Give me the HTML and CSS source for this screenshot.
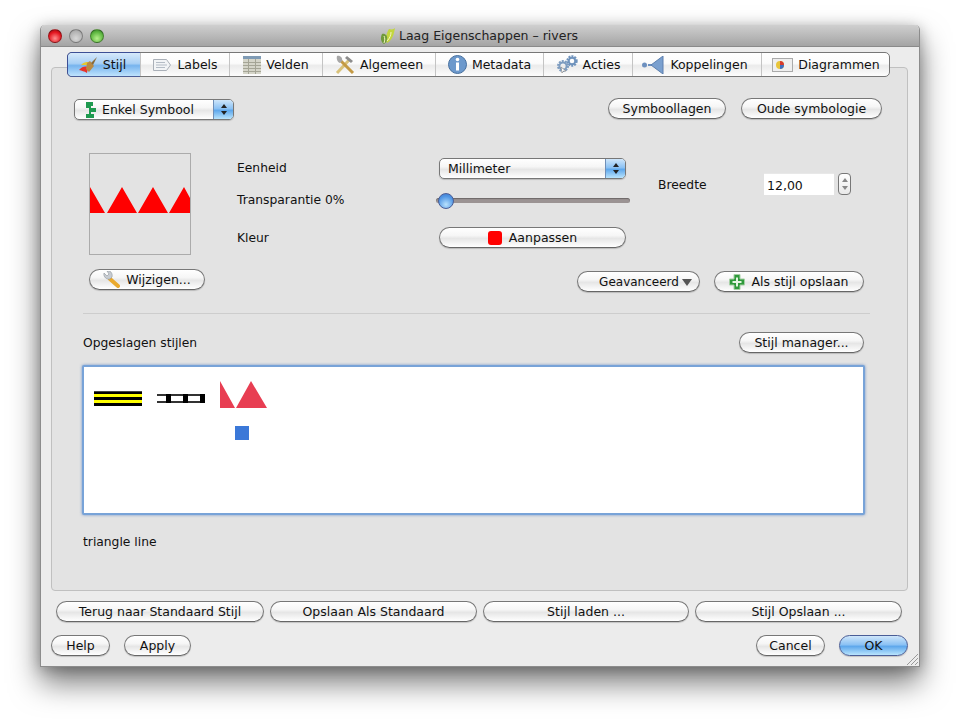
FILE: index.html
```html
<!DOCTYPE html>
<html lang="nl">
<head>
<meta charset="utf-8">
<title>Laag Eigenschappen - rivers</title>
<link rel="stylesheet" href="styles.css">
</head>
<body>
<div class="window">
  <header class="titlebar">
    <div class="lights"><span class="light red"></span><span class="light grey"></span><span class="light green"></span></div>
    <div class="title">
      <svg class="title-icon" width="16" height="18" viewBox="0 0 16 18"><path d="M9 2c3 1 5 0 6-1-1 5-2 12-8 15C5 12 6 7 9 2z" fill="#c3d63f"/><path d="M2 7c3-1 6 2 5 5 0 2-1 4-3 5C1 15 0 11 2 7z" fill="#6f9a3a"/><path d="M4 9c1 2 1 4 0 7M11 5c0 3-1 6-4 9" stroke="#f4f7c0" fill="none"/></svg>
      <span>Laag Eigenschappen – rivers</span>
    </div>
  </header>
  <main class="content">
    <nav class="tabs">
      <div class="tab active">
        <svg width="20" height="18" viewBox="0 0 20 18"><path d="M1 14c3-4 7-4 9-3l-1 6c-3-2-5-2-8-3z" fill="#e8322a"/><path d="M3 9c3-3 5-3 7-3l1 3C8 9 6 9 3 9z" fill="#e7c82e"/><path d="M9 7l3-2 4 5-5 6-3-3z" fill="#b98a45"/><path d="M13 7l6-6-4 8z" fill="#8a6b3a"/></svg>
        <span>Stijl</span></div>
      <div class="tab">
        <svg width="20" height="14" viewBox="0 0 20 14"><path d="M1.500 1.500h13l4 5.500-4 5.500h-13z" fill="#f2f4f6" stroke="#aab0b8"/><path d="M4 4.500h9M4 7h11M4 9.500h9" stroke="#b4bcc6"/></svg>
        <span>Labels</span></div>
      <div class="tab">
        <svg width="18" height="18" viewBox="0 0 18 18"><rect width="18" height="18" fill="#d5d5c9"/><rect width="18" height="3" fill="#7f9bb5"/><path d="M0 6.500h18M0 9.500h18M0 12.500h18M0 15.500h18M5.500 3v15M12.500 3v15" stroke="#a5a596"/></svg>
        <span>Velden</span></div>
      <div class="tab">
        <svg width="20" height="20" viewBox="0 0 20 20"><path d="M2 18L15 4" stroke="#d9c27a" stroke-width="3"/><path d="M12 1l6 5-2 2-6-5z" fill="#8d8d8d"/><path d="M18 18L6 6" stroke="#c49a44" stroke-width="3"/><path d="M2 1c3-1 6 2 5 5L5 8C3 8 1 4 2 1z" fill="#a7a7a7"/></svg>
        <span>Algemeen</span></div>
      <div class="tab">
        <svg width="19" height="19" viewBox="0 0 19 19"><circle cx="9.500" cy="9.500" r="9" fill="#6d99cc" stroke="#47709f"/><circle cx="9.500" cy="4.500" r="1.800" fill="#fff"/><rect x="8" y="7.500" width="3" height="8" fill="#fff"/></svg>
        <span>Metadata</span></div>
      <div class="tab">
        <svg width="22" height="19" viewBox="0 0 22 19"><circle cx="7" cy="11" r="5" fill="none" stroke="#7d9cc0" stroke-width="2" stroke-dasharray="2 1.100"/><circle cx="7" cy="11" r="3.600" fill="none" stroke="#7d9cc0" stroke-width="2"/><circle cx="16" cy="6" r="4.700" fill="none" stroke="#6f93bd" stroke-width="2" stroke-dasharray="2 1"/><circle cx="16" cy="6" r="3.300" fill="none" stroke="#6f93bd" stroke-width="2"/><path d="M5 12l1 6 1.500-2 2.500 0z" fill="#fff" stroke="#777" stroke-width=".6"/></svg>
        <span>Acties</span></div>
      <div class="tab links">
        <svg width="23" height="18" viewBox="0 0 23 18"><circle cx="2.500" cy="9" r="2.500" fill="#6d90bf"/><path d="M6 9h4" stroke="#6d90bf" stroke-width="2"/><path d="M9 9l12-9v18z" fill="#7aa0cf" stroke="#5c7fae"/></svg>
        <span>Koppelingen</span></div>
      <div class="tab last">
        <svg width="21" height="14" viewBox="0 0 21 14"><rect x=".5" y=".5" width="20" height="13" fill="#efefef" stroke="#aaa"/><circle cx="8" cy="7" r="4" fill="#e8c53a"/><path d="M8 7V3a4 4 0 0 1 4 4z" fill="#d63a2f"/><path d="M8 7h4a4 4 0 0 1-4 4z" fill="#3f6fc0"/></svg>
        <span>Diagrammen</span></div>
    </nav>
    <section class="pane">
      <div class="top-row">
        <div class="select symbol-select">
          <svg class="select-icon" width="12" height="16" viewBox="0 0 12 16"><path d="M1 0h7v4H6v2h5v4H6v2h3v4H1v-4h3V6H1z" fill="#1f9a50"/></svg>
          <span class="select-text">Enkel Symbool</span>
          <span class="arrows"><i class="up"></i><i class="down"></i></span>
        </div>
        <div class="top-buttons">
          <button class="btn symbol-layers">Symboollagen</button>
          <button class="btn old-symbology">Oude symbologie</button>
        </div>
      </div>

      <div class="settings">
        <div class="preview">
          <svg width="100" height="100" viewBox="0 0 100 100"><path d="M0 33L15 59H0zM17 59L32 33 47 59zM48 59L63 33 78 59zM79 59L94 33 100 44V59z" fill="#f00"/></svg>
        </div>
        <div class="form">
          <label class="lbl eenheid">Eenheid</label>
          <div class="select unit-select">
            <span class="select-text">Millimeter</span>
            <span class="arrows"><i class="up"></i><i class="down"></i></span>
          </div>
          <div class="width-field">
            <label class="lbl breedte">Breedte</label>
            <span class="spin">12,00</span>
            <span class="stepper"><i class="up"></i><i class="down"></i></span>
          </div>
          <label class="lbl transparency">Transparantie 0%</label>
          <div class="slider"><span class="knob"></span></div>
          <label class="lbl kleur">Kleur</label>
          <button class="btn color-btn"><span class="swatch"></span>Aanpassen</button>
        </div>
      </div>

      <div class="action-row">
        <button class="btn change-btn">
          <svg width="17" height="17" viewBox="0 0 17 17"><path d="M7 8l8 7" stroke="#e9a92e" stroke-width="4" stroke-linecap="round"/><path d="M1 2l3 3 2-2-2-3C7-1 10 2 9 6L7 8C4 9 0 6 1 2z" fill="#c7ccd2" stroke="#8d939a" stroke-width=".6"/></svg>
          Wijzigen...</button>
        <div class="action-right">
          <button class="btn advanced-btn">Geavanceerd<i class="menu-arrow"></i></button>
          <button class="btn save-style-btn">
            <svg width="16" height="16" viewBox="0 0 16 16"><path d="M5 .5h6v4.500h4.500v6H11v4.500H5V11H.5V5H5z" fill="#2f9a3b" stroke="#a5cfa5"/><path d="M7 3.500h2V7h3.500v2H9v3.500H7V9H3.500V7H7z" fill="#e4f5e2"/></svg>
            Als stijl opslaan</button>
        </div>
      </div>

      <hr class="divider">

      <div class="saved-header">
        <span class="lbl">Opgeslagen stijlen</span>
        <button class="btn manager-btn">Stijl manager...</button>
      </div>

      <div class="style-list">
        <svg width="48" height="36" viewBox="0 0 48 36"><rect y="11" width="48" height="15" fill="#000"/><rect y="14" width="48" height="3" fill="#ff0"/><rect y="20" width="48" height="3" fill="#ff0"/><rect y="11" width="48" height="1" fill="#444"/></svg>
        <svg width="48" height="36" viewBox="0 0 48 36"><rect y="14" width="48" height="9" fill="#333"/><rect y="16" width="9" height="5" fill="#fff"/><rect x="14" y="16" width="12" height="5" fill="#fff"/><rect x="31" y="16" width="12" height="5" fill="#fff"/><rect x="9" y="14" width="5" height="9" fill="#000"/><rect x="26" y="14" width="5" height="9" fill="#000"/><rect x="43" y="14" width="5" height="9" fill="#000"/></svg>
        <svg width="48" height="36" viewBox="0 0 48 36"><path d="M0 1L15 28H0zM16 28L31 1 47 28z" fill="#e83e52"/></svg>
        <span class="list-spacer"></span>
        <span class="list-spacer"></span>
        <svg width="48" height="34" viewBox="0 0 48 34"><rect x="15" y="10" width="14" height="14" fill="#3b78d8"/></svg>
      </div>

      <p class="lbl caption">triangle line</p>
    </section>

    <div class="style-buttons">
      <button class="btn">Terug naar Standaard Stijl</button>
      <button class="btn">Opslaan Als Standaard</button>
      <button class="btn">Stijl laden ...</button>
      <button class="btn">Stijl Opslaan ...</button>
    </div>

    <div class="dialog-buttons">
      <div class="dialog-left">
        <button class="btn help-btn">Help</button>
        <button class="btn apply-btn">Apply</button>
      </div>
      <div class="dialog-right">
        <button class="btn cancel-btn">Cancel</button>
        <button class="btn primary ok-btn">OK</button>
      </div>
    </div>
  </main>
  <svg class="grip" width="13" height="13" viewBox="0 0 13 13"><path d="M1 12L12 1M5 12l7-7M9 12l3-3" stroke="#999" fill="none"/></svg>
</div>
</body>
</html>
```
FILE: styles.css
```css
* { box-sizing: border-box; }
html, body { margin: 0; height: 100%; background: #fff; overflow: hidden; }
body {
  font-family: "DejaVu Sans", sans-serif;
  font-size: 12.500px;
  color: #111;
  padding: 25px 0 0 40px;
}
.window {
  position: relative;
  width: 880px;
  height: 642px;
  background: #ececec;
  border: 1px solid #8c8c8c;
  border-top: 0;
  border-radius: 5px 5px 0 0;
  box-shadow: 0 16px 30px rgba(0,0,0,.52), 0 2px 14px rgba(0,0,0,.25);
}
.titlebar {
  height: 22px;
  position: relative;
  display: flex;
  justify-content: center;
  align-items: center;
  border-radius: 5px 5px 0 0;
  background: linear-gradient(#cfcfcf, #a4a4a4);
  border-bottom: 1px solid #8a8a8a;
}
.lights { position: absolute; left: 7px; top: 4px; display: flex; gap: 7px; }
.light { width: 14px; height: 14px; border-radius: 50%; border: 1px solid rgba(0,0,0,.3); }
.red { background: radial-gradient(circle at 50% 70%, #ff8f8f, #e3151e 60%, #8e0f12); }
.grey { background: radial-gradient(circle at 50% 70%, #d8d8d8, #b0b0b0 70%, #8f8f8f); }
.green { background: radial-gradient(circle at 50% 70%, #b6f08c, #5fb842 60%, #2f7a23); }
.title { display: flex; align-items: center; gap: 3px; font-size: 12.500px; color: #222; margin-left: -2px; }
.title-icon { display: block; }

.content { padding: 5px 11px 0 10px; }
.tabs {
  position: relative;
  z-index: 1;
  display: grid;
  grid-template-columns: 72px 89px 93px 113px 108px 89px 129px 129px;
  width: 823px;
  height: 25px;
  margin: 0 0 -10px 16px;
  background: linear-gradient(#fff 0, #fbfbfb 45%, #ebebeb 55%, #fdfdfd 100%);
  border: 1px solid #777;
  border-bottom-width: 1.500px;
  border-radius: 5px;
}
.tab {
  display: flex;
  align-items: center;
  justify-content: center;
  gap: 5px;
  border-left: 1px solid #c4c4c4;
  white-space: nowrap;
}
.tab:first-child { border-left: 0; }
.tab.active {
  padding-right: 4px;
  border-radius: 4px 0 0 4px;
  background: linear-gradient(#d6e9fb 0, #a9d0f5 45%, #77b4ee 55%, #bfe3fd 100%);
  box-shadow: 0 -1px 0 #3d4f95, -1px 0 0 #3d4f95, 0 1px 0 #4a5d96;
}
.tab.links { padding-right: 4px; }
.tab svg { flex: none; }
.pane {
  height: 524px;
  background: #e3e3e3;
  border: 1px solid #c0c0c0;
  border-radius: 4px;
  padding-top: 30px;
}

.btn {
  display: inline-flex;
  align-items: center;
  justify-content: center;
  gap: 6px;
  height: 21px;
  padding: 0;
  font: inherit;
  color: #111;
  border: 1px solid #777;
  border-bottom-color: #666;
  border-radius: 11px;
  background: linear-gradient(#fff 0, #f6f6f6 40%, #e6e6e6 55%, #fff 100%);
  box-shadow: 0 1px 1px rgba(0,0,0,.18);
}
.primary {
  background: linear-gradient(#cfe6fa 0, #8cc2f4 45%, #5fa8ec 55%, #b9e4fd 100%);
  border-color: #4a5d96;
}

.select {
  display: flex;
  align-items: center;
  height: 21px;
  border: 1px solid #777;
  border-radius: 5px;
  background: linear-gradient(#fff 0, #f6f6f6 40%, #e6e6e6 55%, #fff 100%);
  box-shadow: 0 1px 1px rgba(0,0,0,.18);
  overflow: hidden;
}
.select-text { flex: 1; white-space: nowrap; }
.arrows {
  width: 20px;
  height: 100%;
  display: flex;
  flex-direction: column;
  align-items: center;
  justify-content: center;
  gap: 3px;
  background: linear-gradient(#cfe6fa 0, #8cc2f4 45%, #5fa8ec 55%, #b9e4fd 100%);
  border-left: 1px solid #6f8fb8;
}
.up, .down { display: block; width: 0; height: 0; border-left: 3px solid transparent; border-right: 3px solid transparent; }
.up { border-bottom: 4px solid #222; }
.down { border-top: 4px solid #222; }

.top-row {
  display: flex;
  justify-content: space-between;
  align-items: flex-start;
  padding: 0 25px 0 22px;
}
.symbol-select { width: 160px; margin-top: 1px; }
.select-icon { margin: 0 5px 0 10px; flex: none; }
.top-buttons { display: flex; gap: 15px; }
.symbol-layers { width: 118px; }
.old-symbology { width: 141px; }

.settings {
  display: flex;
  align-items: flex-start;
  margin: 33px 0 0 37px;
}
.preview {
  width: 102px;
  height: 102px;
  border: 1px solid #ababab;
}
.preview svg { display: block; }
.form {
  display: grid;
  grid-template-columns: 202px 187px 32px 193px;
  grid-template-rows: 21px 20px 27px;
  row-gap: 11px;
  align-items: center;
  margin: 5px 0 0 46px;
}
.eenheid { grid-area: 1 / 1; padding-bottom: 2px; }
.unit-select { grid-area: 1 / 2; padding-left: 8px; width: 187px; }
.width-field {
  grid-area: 1 / 4 / 3 / 5;
  display: flex;
  align-items: center;
}
.breedte { width: 106px; padding-top: 1px; }
.spin {
  width: 70px;
  height: 22px;
  background: #fff;
  padding: 4px 0 0 3px;
  line-height: 15px;
  border-top: 1px solid #e8e8e8;
}
.stepper {
  width: 13px;
  height: 22px;
  margin-left: 4px;
  display: flex;
  flex-direction: column;
  align-items: center;
  justify-content: center;
  gap: 4px;
  background: linear-gradient(#fff, #e9e9e9);
  border: 1px solid #777;
  border-radius: 4px;
}
.stepper .up { border-bottom-color: #888; }
.stepper .down { border-top-color: #888; }
.slider {
  grid-area: 2 / 2;
  position: relative;
  height: 5px;
  width: 194px;
  margin-left: -3px;
  background: #9b9393;
  border-radius: 3px;
  box-shadow: inset 0 1px 1px rgba(0,0,0,.3);
}
.knob {
  position: absolute;
  left: 2px;
  top: -5px;
  width: 16px;
  height: 16px;
  border-radius: 50%;
  border: 1px solid #4a5d96;
  background: radial-gradient(circle at 50% 75%, #b9e2fd, #4f95e4 65%, #3f77c8);
}
.transparency { grid-area: 2 / 1; }
.kleur { grid-area: 3 / 1; align-self: end; padding-bottom: 3px; }
.color-btn { grid-area: 3 / 2; align-self: end; width: 187px; gap: 7px; }
.swatch { width: 14px; height: 14px; background: #f00; border-radius: 3px; }
.lbl { font-size: 12.300px; white-space: nowrap; }

.action-row {
  display: flex;
  justify-content: space-between;
  align-items: flex-start;
  margin: 14px 43px 0 37px;
}
.change-btn { width: 116px; }
.action-right { display: flex; gap: 14px; margin-top: 2px; }
.advanced-btn { width: 123px; gap: 3px; padding-left: 14px; font-size: 12px; }
.menu-arrow { width: 0; height: 0; border-left: 5px solid transparent; border-right: 5px solid transparent; border-top: 7px solid #555; margin-top: 1px; }
.save-style-btn { width: 150px; }

.divider { border: 0; border-top: 1px solid #cdcdcd; margin: 21px 37px 0 31px; }

.saved-header {
  display: flex;
  justify-content: space-between;
  align-items: center;
  margin: 18px 43px 0 31px;
}
.manager-btn { width: 125px; }

.style-list {
  display: grid;
  grid-template-columns: repeat(3, 48px);
  grid-template-rows: 36px 34px;
  column-gap: 15px;
  align-content: start;
  width: 783px;
  height: 150px;
  margin: 12px 0 0 30px;
  padding: 13px 0 0 10px;
  background: #fff;
  border: 2px solid #78a3d8;
  border-radius: 2px;
  box-shadow: 0 0 3px rgba(60,110,190,.7);
}
.style-list svg { display: block; }
.caption { margin: 20px 0 0 31px; line-height: 14px; }

.style-buttons {
  display: grid;
  grid-template-columns: 208px 207px 206px 207px;
  column-gap: 6px;
  margin: 10px 0 0 5px;
}
.dialog-buttons {
  display: flex;
  justify-content: space-between;
  margin-top: 13px;
}
.dialog-left, .dialog-right { display: flex; gap: 14px; }
.help-btn { width: 59px; }
.apply-btn { width: 67px; }
.cancel-btn { width: 69px; }
.ok-btn { width: 69px; }
.grip { position: absolute; right: 0; bottom: 0; }
```
